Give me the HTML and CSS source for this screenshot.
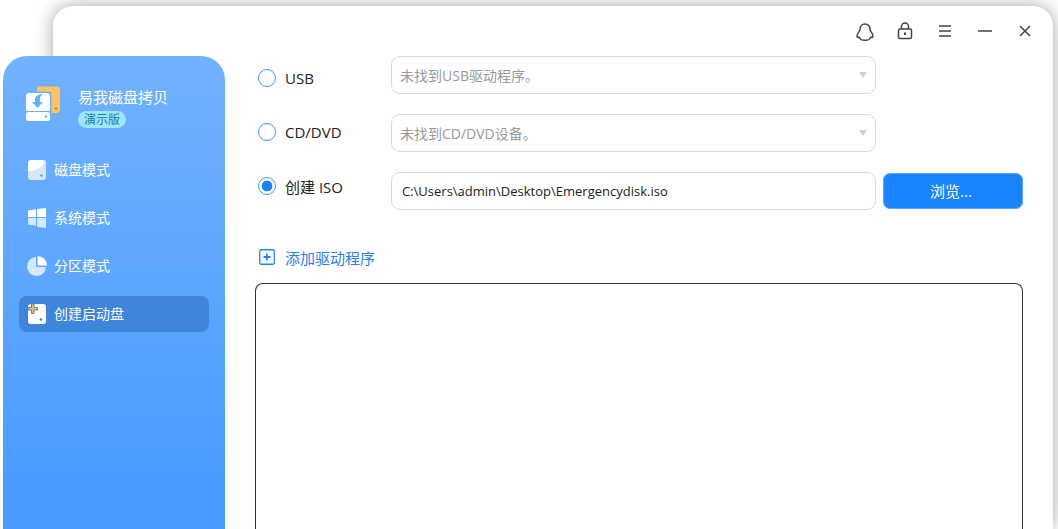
FILE: index.html
```html
<!DOCTYPE html>
<html lang="zh-CN">
<head>
<meta charset="utf-8">
<title>易我磁盘拷贝</title>
<link rel="stylesheet" href="styles.css">
</head>
<body>
<div class="window">
  <aside class="sidebar">
    <div class="brand">
      <svg class="brand-logo" width="36" height="36" viewBox="0 0 36 36">
        <path d="M11 2.500a2 2 0 0 1 2-2h18a3 3 0 0 1 3 3V24a3 3 0 0 1-3 3h-5.500V8.500a3 3 0 0 0-3-3H11z" fill="#fdc35c"/>
        <circle cx="30" cy="22.500" r="1.300" fill="#c98a2c"/>
        <path d="M0 10a3 3 0 0 1 3-3h18a3 3 0 0 1 3 3v15H0z" fill="#fff"/>
        <rect x="0" y="26" width="24" height="9" rx="2.500" fill="#fff"/>
        <circle cx="20" cy="30.500" r="1.200" fill="#6aaefe"/>
        <path d="M18 8c-2.800.5-4 2.200-4 5v3h3l-5.500 6L6 16h3v-3C9 10 13 7.500 18 8z" fill="#6aaefe"/>
      </svg>
      <div class="brand-text">
        <div class="brand-name">易我磁盘拷贝</div>
        <span class="badge">演示版</span>
      </div>
    </div>
    <nav class="nav">
      <a class="nav-item">
        <svg class="nav-icon" width="22" height="22" viewBox="-2 0 22 22">
          <rect x="0" y="1" width="18" height="20" rx="3" fill="#d6e8fd"/>
          <path d="M3 1h13c0 6-5 10.500-16 11.500V4a3 3 0 0 1 3-3z" fill="#fff"/>
          <circle cx="13.500" cy="16.500" r="1.300" fill="#5ea4fd"/>
        </svg>
        <span>磁盘模式</span>
      </a>
      <a class="nav-item">
        <svg class="nav-icon" width="22" height="22" viewBox="-2 0 22 22">
          <path d="M0 3.500l8-1.200V10H0z" fill="#fff"/>
          <path d="M9 2.100L18 1v9H9z" fill="#fff"/>
          <path d="M0 11h8v7.800l-8-1.200z" fill="#d6e8fd"/>
          <path d="M9 11h9v10l-9-1.100z" fill="#d6e8fd"/>
        </svg>
        <span>系统模式</span>
      </a>
      <a class="nav-item">
        <svg class="nav-icon" width="22" height="22" viewBox="0 0 22 22">
          <path d="M10 2a9.500 9.500 0 1 0 10 10H10z" fill="#d6e8fd"/>
          <path d="M11.500 1a9.500 9.500 0 0 1 9.500 9.500h-9.500z" fill="#fff"/>
        </svg>
        <span>分区模式</span>
      </a>
      <a class="nav-item nav-item-active">
        <svg class="nav-icon" width="22" height="22" viewBox="0 0 22 22">
          <rect x="2" y="1" width="18" height="20" rx="3" fill="#fff"/>
          <circle cx="15" cy="16.500" r="1.300" fill="#3f85dc"/>
          <path d="M5.500 1h2.500v3.500h3.500V7H8v3.500H5.500V7H2V4.500h3.500z" fill="#fdb94e" stroke="#3e85dc" stroke-width="1"/>
        </svg>
        <span>创建启动盘</span>
      </a>
    </nav>
  </aside>
  <main class="main">
    <header class="titlebar">
      <svg class="tool" width="20" height="20" viewBox="0 0 20 20" fill="none" stroke="#444" stroke-width="1.500">
        <path d="M10 3c-3.200 0-5 2.400-5 5.200 0 .8-.2 1.300-.8 2.200C3 12 2 13.600 2 15.200c0 1.300.8 1.500 2.200.8.4 1 1 1.800 1.800 2.500 1.500 1 6.500 1 8 0 .8-.7 1.400-1.500 1.800-2.500 1.400.7 2.200.5 2.200-.8 0-1.600-1-3.200-2.200-4.800-.6-.9-.8-1.400-.8-2.200C15 5.400 13.200 3 10 3z" stroke-linejoin="round"/>
      </svg>
      <svg class="tool" width="20" height="20" viewBox="0 0 20 20" fill="none" stroke="#444" stroke-width="1.500">
        <rect x="3.500" y="8" width="13" height="9.500" rx="1.500"/>
        <path d="M6.500 8V5.500a3.500 3.500 0 0 1 7 0V8"/>
        <path d="M10 11.500v2.500" stroke-width="2"/>
      </svg>
      <svg class="tool" width="20" height="20" viewBox="0 0 20 20" fill="none" stroke="#444" stroke-width="1.400">
        <path d="M4 5h12M4 10h12M4 15h12"/>
      </svg>
      <svg class="tool" width="20" height="20" viewBox="0 0 20 20" fill="none" stroke="#444" stroke-width="1.500">
        <path d="M3 10h14"/>
      </svg>
      <svg class="tool" width="20" height="20" viewBox="0 0 20 20" fill="none" stroke="#444" stroke-width="1.500">
        <path d="M5 5l10 10M15 5L5 15"/>
      </svg>
    </header>
    <section class="content">
      <div class="form">
        <label class="option option-usb"><span class="radio"></span><span>USB</span></label>
        <div class="field field-select"><span>未找到USB驱动程序。</span><i class="caret"></i></div>
        <span></span>
        <label class="option option-cd"><span class="radio"></span><span>CD/DVD</span></label>
        <div class="field field-select"><span>未找到CD/DVD设备。</span><i class="caret"></i></div>
        <span></span>
        <label class="option option-iso"><span class="radio radio-on"></span><span>创建 ISO</span></label>
        <div class="field field-path"><span>C:\Users\admin\Desktop\Emergencydisk.iso</span></div>
        <button class="browse">浏览...</button>
      </div>
      <a class="add-driver">
        <svg width="16" height="16" viewBox="0 0 16 16" fill="none">
          <rect x=".75" y=".75" width="14.500" height="14.500" rx="1.500" stroke="#1e86ff" stroke-width="1.300"/>
          <path d="M4.500 8h7M8 4.500v7" stroke="#1e86ff" stroke-width="1.800"/>
        </svg>
        <span>添加驱动程序</span>
      </a>
      <div class="driver-list"></div>
    </section>
  </main>
</div>
</body>
</html>
```
FILE: styles.css
```css
* { box-sizing: border-box; }
html, body { margin: 0; height: 100%; overflow: hidden; background: #fff; }
body {
  font-family: "Open Sans", "Noto Sans CJK SC", sans-serif;
  font-size: 14px;
  color: #222;
}
.window {
  display: flex;
  height: 523px;
  margin: 6px 5px 0 53px;
  background: #fff;
  border-radius: 20px 20px 0 0;
  box-shadow: 0 0 18px rgba(0, 0, 0, .36);
}
.sidebar {
  flex: none;
  width: 222px;
  margin: 50px 0 0 -50px;
  padding: 29px 16px 0;
  border-radius: 24px 24px 0 0;
  background: linear-gradient(180deg, #71b2ff 0%, #4a9bff 92%);
  color: #fff;
}
.brand { display: flex; align-items: flex-start; height: 67px; padding-left: 7px; }
.brand-logo { flex: none; margin-top: 1px; }
.brand-text { margin-left: 16px; }
.brand-name { font-size: 15px; line-height: 24px; }
.badge {
  display: block;
  width: 48px;
  height: 17px;
  margin-top: 2px;
  border-radius: 9px;
  background: #9be6fa;
  color: #1c7d9e;
  font-size: 12px;
  line-height: 17px;
  text-align: center;
}
.nav { display: flex; flex-direction: column; gap: 12px; }
.nav-item {
  display: flex;
  align-items: center;
  height: 36px;
  padding-left: 7px;
  border-radius: 8px;
  font-size: 14px;
}
.nav-item span { margin-top: -2px; }
.nav-item-active { background: #3e85dc; }
.nav-icon { flex: none; margin-right: 6px; }
.main { flex: 1; min-width: 0; display: flex; flex-direction: column; }
.titlebar {
  flex: none;
  display: flex;
  justify-content: flex-end;
  align-items: center;
  gap: 20px;
  height: 50px;
  padding-right: 18px;
}
.tool { display: block; }
.content { flex: 1; min-height: 0; display: flex; flex-direction: column; padding: 0 30px; }
.form {
  display: grid;
  grid-template-columns: 133px 485px 140px;
  row-gap: 20px;
  padding-left: 3px;
  grid-auto-rows: 38px;
  align-items: center;
}
.form > *:nth-child(3n) { margin-left: 7px; width: 140px; }
.option { display: flex; align-items: center; gap: 9px; font-size: 15px; color: #222; }
.option-usb { margin-top: 6px; }
.option-cd { margin-top: -2px; }
.option-iso { margin-top: -10px; }
.radio {
  flex: none;
  width: 18px;
  height: 18px;
  border: 1.500px solid #3f96ff;
  border-radius: 50%;
  background: #fff;
}
.radio-on { background: radial-gradient(circle, #1a84ff 0 5px, #fff 5.700px); }
.field {
  display: flex;
  align-items: center;
  justify-content: space-between;
  height: 38px;
  border: 1px solid #d9d9d9;
  border-radius: 9px;
  background: #fff;
  font-size: 14px;
}
.field-select { padding: 0 8px; color: #999; }
.field-path { padding: 0 10px; color: #222; font-size: 13px; }
.caret {
  width: 0;
  height: 0;
  border-left: 4.500px solid transparent;
  border-right: 4.500px solid transparent;
  border-top: 6px solid #d0d0d0;
}
.browse {
  height: 36px;
  padding: 0 4px 2px 0;
  border: 1px solid #5ba5ff;
  border-radius: 7px;
  background: #1a84ff;
  color: #fff;
  font: inherit;
  font-size: 15px;
}
.add-driver {
  display: flex;
  align-items: center;
  gap: 10px;
  margin: 35px 0 0 4px;
  height: 24px;
  color: #2b7ef5;
  font-size: 15px;
}
.driver-list {
  flex: 1;
  margin-top: 14px;
  border: 1px solid #333;
  border-bottom: 0;
  border-radius: 8px 8px 0 0;
  background: #fff;
}
```
